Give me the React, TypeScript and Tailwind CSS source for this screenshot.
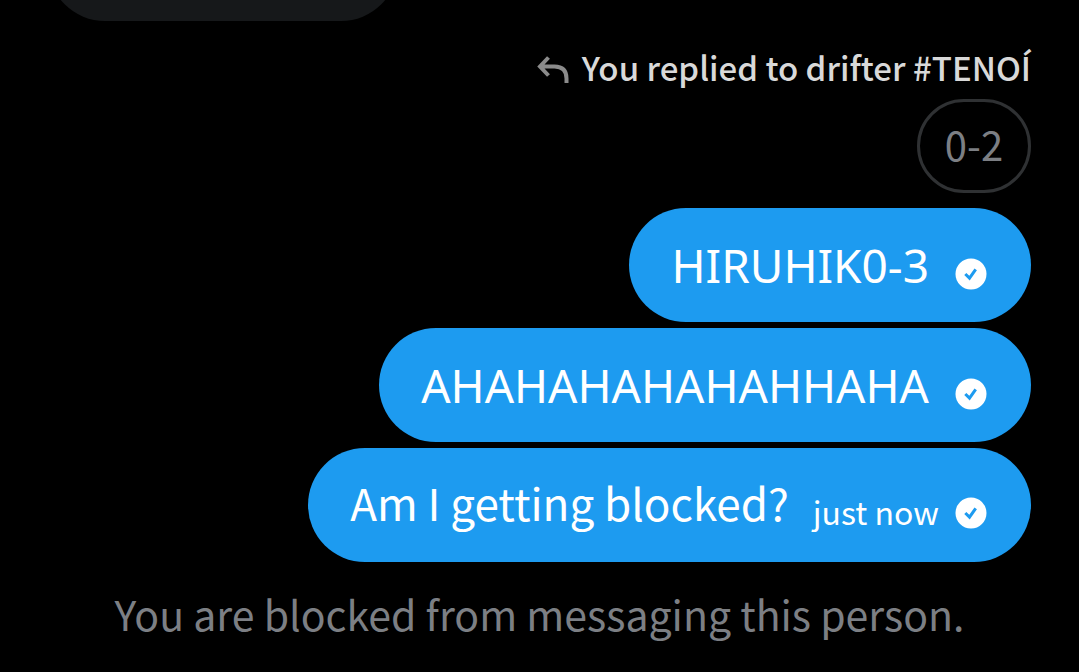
import type { ReactNode } from "react";

function Sent() {
  return (
    <svg viewBox="0 0 32 32" className="h-8 w-8 shrink-0" role="img" aria-label="Sent">
      <circle cx="16" cy="16" r="15.5" fill="white" />
      <path d="M10.3 16l4.2 4.1 6.2-8.8" fill="none" stroke="#1d9bf0" strokeWidth="3" />
    </svg>
  );
}

function Bubble({ children, time, caps }: { children: ReactNode; time?: string; caps?: boolean }) {
  return (
    <li className="flex h-[114px] items-center rounded-full bg-[#1d9bf0] pr-11 pl-[42px] text-white">
      <p className={caps ? "font-['Noto_Sans',sans-serif] text-[46px] leading-[60px]" : "pb-1.5 text-[44px] leading-[60px]"}>{children}</p>
      {time && <time className="ml-6 pt-3 text-[32px] leading-10">{time}</time>}
      <span className={time ? "ml-4 pt-4" : "ml-[26px] pt-[18px]"}>
        <Sent />
      </span>
    </li>
  );
}

export default function App() {
  return (
    <main className="flex min-h-screen flex-col overflow-hidden bg-black font-['Noto_Sans_CJK_JP','Noto_Sans',sans-serif]">
      <div className="ml-12 flex h-[21px] items-end overflow-hidden">
        <div className="h-[114px] w-[350px] shrink-0 rounded-full bg-[#16181a]" />
      </div>
      <div className="mt-[26px] flex items-center justify-end gap-3 pr-12 text-[#d9d9d9]">
        <svg viewBox="0 0 34 30" className="h-[30px] w-[34px]" fill="none" stroke="#8b8b8b" strokeWidth="4" aria-hidden="true">
          <path d="M12.5 4.5L4 13.5l8.5 9M4 13.5h14.5q12 0 12 12v4.5" />
        </svg>
        <p className="pb-0.5 text-[33px] leading-10 font-medium">You replied to drifter #TENOÍ</p>
      </div>
      <div className="mt-[10px] mr-12 flex h-[94px] min-w-[114px] items-center justify-center self-end rounded-full border-[3px] border-[#2f3133] pb-1 text-[40px] text-[#7c7f84]">0-2</div>
      <ul className="mt-[15px] mr-12 flex flex-col items-end gap-[6px]">
        <Bubble caps>HIRUHIK0-3</Bubble>
        <Bubble caps>AHAHAHAHAHAHHAHA</Bubble>
        <Bubble time="just now">Am I getting blocked?</Bubble>
      </ul>
      <p className="mt-[21px] text-center text-[41px] leading-[60px] text-[#7c7f84]">You are blocked from messaging this person.</p>
    </main>
  );
}
